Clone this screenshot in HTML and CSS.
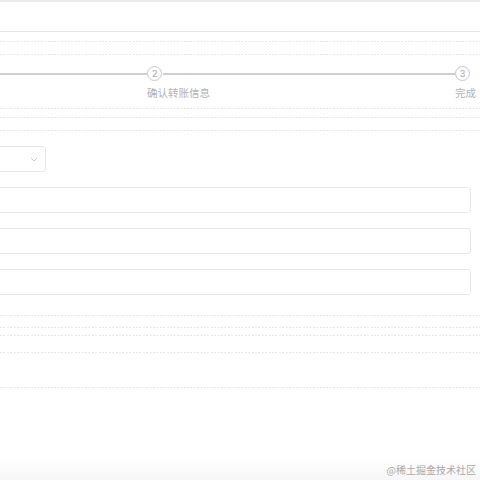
FILE: index.html
```html
<!DOCTYPE html>
<html lang="zh-CN">
<head>
<meta charset="utf-8">
<title>转账</title>
<link rel="stylesheet" href="styles.css">
</head>
<body>
<div class="page">
  <div class="topband"></div>
  <div class="header"></div>
  <div class="dash d1"></div>
  <div class="dash d2"></div>
  <div class="steps">
    <div class="seg first"></div>
    <div class="step">
      <div class="circle">2</div>
      <div class="label">确认转账信息</div>
    </div>
    <div class="seg grow"></div>
    <div class="step">
      <div class="circle">3</div>
      <div class="label">完成</div>
    </div>
  </div>
  <div class="dash d3"></div>
  <div class="dash d4"></div>
  <div class="dash d5"></div>
  <div class="form">
    <div class="select">
      <svg class="chev" width="8" height="5" viewBox="0 0 8 5"><path d="M1 1 L4 4 L7 1" fill="none" stroke="#c8c8cf" stroke-width="1"/></svg>
    </div>
    <div class="input"></div>
    <div class="input"></div>
    <div class="input"></div>
  </div>
  <div class="dash d6"></div>
  <div class="dash d7"></div>
  <div class="dash d8"></div>
  <div class="dash d9"></div>
  <div class="dash d10"></div>
  <div class="shade"></div>
  <div class="watermark">@稀土掘金技术社区</div>
</div>
</body>
</html>
```
FILE: styles.css
```css
html, body {
  margin: 0;
  padding: 0;
  background: #ffffff;
}
.page {
  position: relative;
  width: 480px;
  height: 480px;
  overflow: hidden;
  font-family: "Noto Sans CJK SC", "Noto Sans", sans-serif;
}
.topband {
  height: 2px;
  background: #ececed;
}
.header {
  height: 28.5px;
  border-bottom: 1.5px solid #e6e4f0;
}
.dash {
  height: 1px;
  background-image: repeating-linear-gradient(to right, #e6e6e8 0 2px, transparent 2px 3.4px);
}
.d1 { margin-top: 9px; }
.d2 { margin-top: 12px; }
.d3 { margin-top: 8px; }
.d4 { margin-top: 8px; }
.d5 { margin-top: 12px; }
.d6 { margin-top: 20px; }
.d7 { margin-top: 11px; }
.d8 { margin-top: 7px; }
.d9 { margin-top: 16px; }
.d10 { margin-top: 34px; }

.steps {
  margin-top: 11px;
  display: flex;
  align-items: flex-start;
  padding-right: 9px;
}
.seg {
  height: 1.6px;
  margin-top: 7.5px;
  background: #cdcdd3;
}
.seg.first { width: 147px; flex: none; }
.seg.grow { flex: 1; }
.step {
  width: 16px;
  flex: none;
  display: flex;
  flex-direction: column;
  align-items: flex-start;
  white-space: nowrap;
}
.circle {
  width: 13.4px;
  height: 13.4px;
  border: 1.3px solid #c6c6cd;
  border-radius: 50%;
  display: flex;
  align-items: center;
  justify-content: center;
  font-family: "Inter", "Noto Sans", sans-serif;
  font-size: 9px;
  font-weight: 500;
  color: #aeaeb6;
  line-height: 1;
}
.label {
  margin-top: 5.5px;
  font-size: 10.5px;
  line-height: 14px;
  color: #b1b1b9;
}

.form {
  margin-top: 15px;
  margin-left: -40px;
  margin-right: 9px;
  display: flex;
  flex-direction: column;
  gap: 15px;
}
.select {
  width: 86px;
  height: 26px;
  box-sizing: border-box;
  border: 1px solid #e6e6ea;
  border-radius: 3px;
  display: flex;
  align-items: center;
  justify-content: flex-end;
  padding-right: 7px;
}
.input {
  height: 26px;
  box-sizing: border-box;
  border: 1.5px solid #e8e8ec;
  border-radius: 3px;
}
.shade {
  position: absolute;
  left: 0;
  right: 0;
  bottom: 0;
  height: 24px;
  background: linear-gradient(to bottom, rgba(0,0,0,0), rgba(0,0,0,0.035));
}
.watermark {
  position: absolute;
  right: 4px;
  bottom: 3px;
  font-family: "Noto Sans CJK SC", sans-serif;
  font-size: 10px;
  line-height: 14px;
  color: #a9a9ab;
}
```
